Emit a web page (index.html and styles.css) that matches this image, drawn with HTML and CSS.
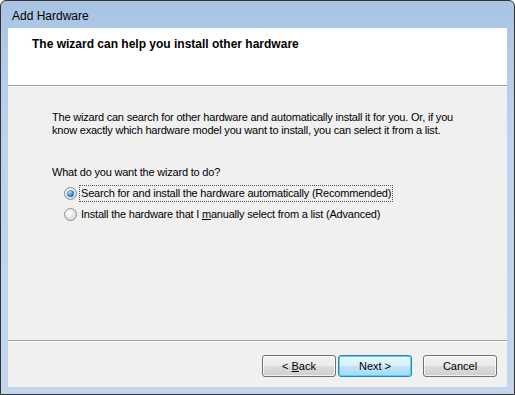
FILE: index.html
```html
<!DOCTYPE html>
<html lang="en">
<head>
    <meta charset="UTF-8">
    <title>Add Hardware</title>
    <link rel="stylesheet" href="styles.css">
</head>
<body>
    <div class="window">
        <div class="titlebar">Add Hardware</div>

        <div class="client">
            <div class="header">
                <h1>The wizard can help you install other hardware</h1>
            </div>

            <div class="content">
                <p class="intro">The wizard can search for other hardware and automatically install it for you. Or, if you know exactly which hardware model you want to install, you can select it from a list.</p>

                <p class="question">What do you want the wizard to do?</p>

                <label class="option">
                    <span class="radio checked"></span>
                    <span class="option-text focused">Search for and install the hardware automatically (Recommended)</span>
                </label>
                <label class="option">
                    <span class="radio"></span>
                    <span class="option-text">Install the hardware that I <u>m</u>anually select from a list (Advanced)</span>
                </label>
            </div>

            <div class="footer">
                <button class="btn">&lt; <u>B</u>ack</button>
                <button class="btn default">Next &gt;</button>
                <button class="btn cancel">Cancel</button>
            </div>
        </div>
    </div>
</body>
</html>
```

FILE: styles.css
```css
* {
    margin: 0;
    padding: 0;
    box-sizing: border-box;
}

body {
    font-family: "Liberation Sans", Arial, sans-serif;
    font-size: 11px;
    color: #000;
    background: #fff;
}

.window {
    width: 515px;
    height: 395px;
    border: 1px solid #333;
    border-radius: 6px 6px 0 0;
    background: linear-gradient(#a9c4e3, #bad2ec 30%, #c2d7ee);
    padding: 0 7px 7px 7px;
    display: flex;
    flex-direction: column;
}

.titlebar {
    height: 27px;
    padding: 2px 0 0 4px;
    display: flex;
    align-items: center;
    font-size: 12px;
    color: #000;
}

.client {
    flex: 1;
    background: #f0f0f0;
    display: flex;
    flex-direction: column;
}

.header {
    height: 58px;
    background: #fff;
    border-bottom: 1px solid #a0a0a0;
    box-shadow: 0 1px 0 #fff;
    padding: 9px 0 0 24px;
}

.header h1 {
    font-size: 12px;
    font-weight: bold;
    line-height: 14px;
}

.content {
    flex: 1;
    padding: 25px 0 0 44px;
    letter-spacing: -0.2px;
}

.intro {
    line-height: 13px;
    width: 420px;
}

.question {
    margin-top: 29px;
    line-height: 13px;
}

.option {
    display: flex;
    align-items: center;
    height: 21px;
    padding-left: 12px;
}

.option:first-of-type {
    margin-top: 4px;
}

.radio {
    width: 13px;
    height: 13px;
    border-radius: 50%;
    border: 1px solid #8e8f8f;
    background: radial-gradient(circle at 40% 35%, #fff, #dcdcdc 70%, #c8c8c8);
    margin-right: 2px;
    position: relative;
}

.radio.checked::after {
    content: "";
    position: absolute;
    left: 2px;
    top: 2px;
    width: 7px;
    height: 7px;
    border-radius: 50%;
    background: radial-gradient(circle at 40% 35%, #a8e2fb, #2b77c2 60%, #0d4a8c);
}

.option-text {
    padding: 1px 1px;
    border: 1px dotted transparent;
    line-height: 13px;
}

.option-text.focused {
    border-color: #555;
}

.footer {
    height: 47px;
    border-top: 1px solid #a0a0a0;
    box-shadow: inset 0 1px 0 #fff;
    display: flex;
    align-items: flex-start;
    padding: 14px 0 0 254px;
}

.btn {
    width: 74px;
    height: 22px;
    font-family: inherit;
    font-size: 11px;
    color: #000;
    border: 1px solid #707070;
    border-radius: 3px;
    background: linear-gradient(#f2f2f2, #ebebeb 50%, #dddddd 51%, #cfcfcf);
    box-shadow: inset 0 0 0 1px rgba(255, 255, 255, 0.7);
    margin-right: 2px;
}

.btn.default {
    border-color: #3c7fb1;
    background: linear-gradient(#eaf6fd, #d9f0fc 50%, #bee6fd 51%, #a7d9f5);
    box-shadow: inset 0 0 0 1px #48d7fb;
}

.btn.cancel {
    margin-left: 9px;
}
```
